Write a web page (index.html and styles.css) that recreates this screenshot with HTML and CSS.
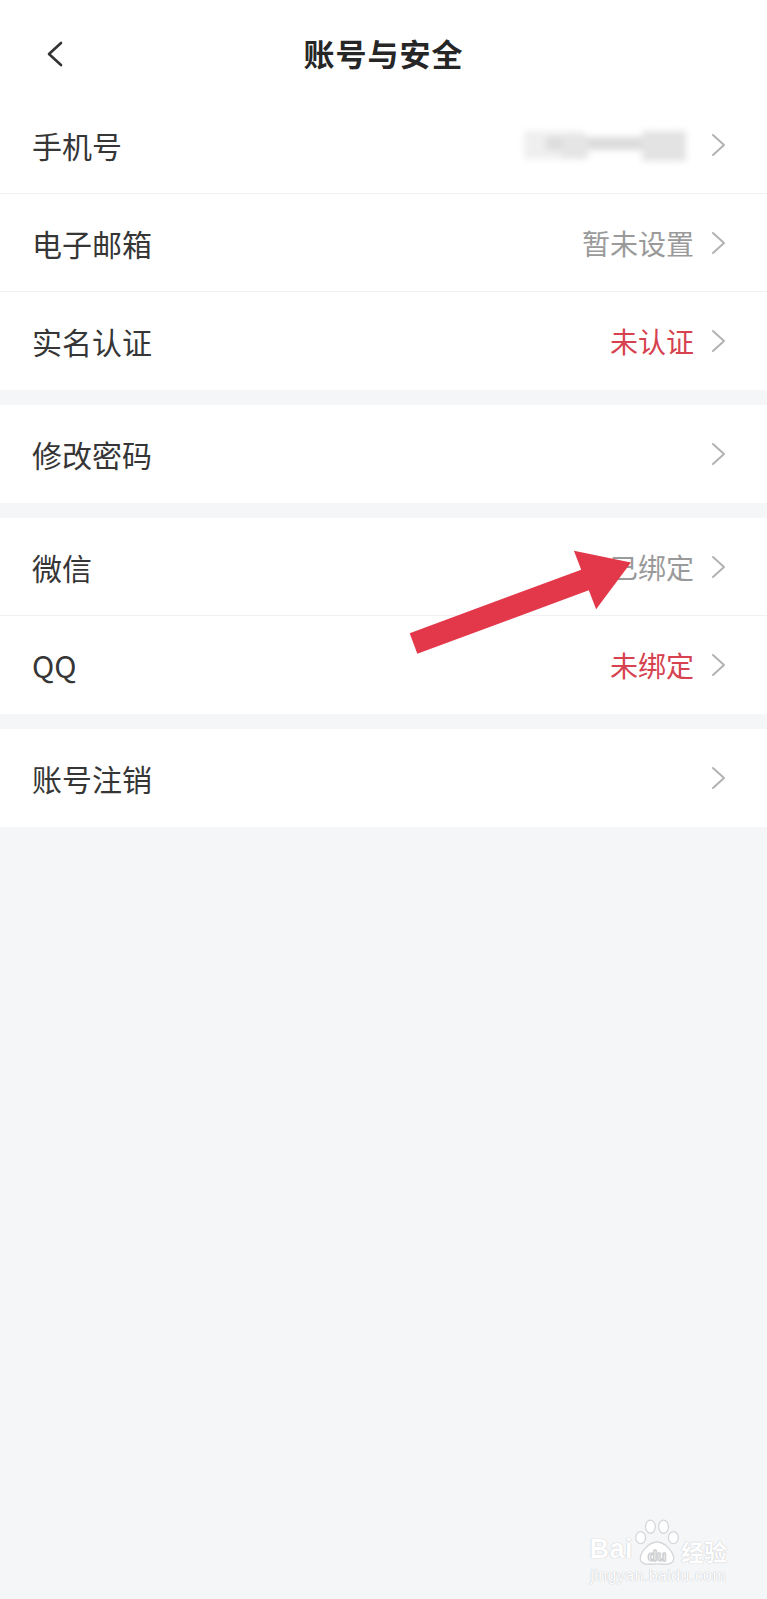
FILE: index.html
```html
<!DOCTYPE html>
<html lang="zh-CN">
<head>
<meta charset="utf-8">
<title>账号与安全</title>
<link rel="stylesheet" href="styles.css">
</head>
<body>
<div class="page">
  <header class="nav">
    <button class="back" aria-label="返回">
      <svg width="18" height="26" viewBox="0 0 18 26"><polyline points="15,2 3,13 15,24" fill="none" stroke="#333" stroke-width="2.6" stroke-linecap="round" stroke-linejoin="round"/></svg>
    </button>
    <h1 class="title">账号与安全</h1>
    <span class="nav-spacer"></span>
  </header>

  <section class="group">
    <a class="row">
      <span class="label">手机号</span>
      <span class="masked" aria-label="已隐藏的手机号">
        <i class="m m1"></i><i class="m m2"></i><i class="m m3"></i><i class="m m4"></i>
      </span>
      <svg class="chev" width="16" height="24" viewBox="0 0 16 24"><polyline points="2,2 13,12 2,22" fill="none" stroke="#b2b2b2" stroke-width="2" stroke-linecap="round" stroke-linejoin="round"/></svg>
    </a>
    <a class="row">
      <span class="label">电子邮箱</span>
      <span class="value">暂未设置</span>
      <svg class="chev" width="16" height="24" viewBox="0 0 16 24"><polyline points="2,2 13,12 2,22" fill="none" stroke="#b2b2b2" stroke-width="2" stroke-linecap="round" stroke-linejoin="round"/></svg>
    </a>
    <a class="row">
      <span class="label">实名认证</span>
      <span class="value warn">未认证</span>
      <svg class="chev" width="16" height="24" viewBox="0 0 16 24"><polyline points="2,2 13,12 2,22" fill="none" stroke="#b2b2b2" stroke-width="2" stroke-linecap="round" stroke-linejoin="round"/></svg>
    </a>
  </section>

  <section class="group">
    <a class="row">
      <span class="label">修改密码</span>
      <svg class="chev" width="16" height="24" viewBox="0 0 16 24"><polyline points="2,2 13,12 2,22" fill="none" stroke="#b2b2b2" stroke-width="2" stroke-linecap="round" stroke-linejoin="round"/></svg>
    </a>
  </section>

  <section class="group">
    <a class="row">
      <span class="label">微信</span>
      <span class="value">已绑定</span>
      <svg class="chev" width="16" height="24" viewBox="0 0 16 24"><polyline points="2,2 13,12 2,22" fill="none" stroke="#b2b2b2" stroke-width="2" stroke-linecap="round" stroke-linejoin="round"/></svg>
    </a>
    <a class="row">
      <span class="label">QQ</span>
      <span class="value warn">未绑定</span>
      <svg class="chev" width="16" height="24" viewBox="0 0 16 24"><polyline points="2,2 13,12 2,22" fill="none" stroke="#b2b2b2" stroke-width="2" stroke-linecap="round" stroke-linejoin="round"/></svg>
    </a>
  </section>

  <section class="group">
    <a class="row">
      <span class="label">账号注销</span>
      <svg class="chev" width="16" height="24" viewBox="0 0 16 24"><polyline points="2,2 13,12 2,22" fill="none" stroke="#b2b2b2" stroke-width="2" stroke-linecap="round" stroke-linejoin="round"/></svg>
    </a>
  </section>

  <svg class="annot-arrow" width="767" height="1599" viewBox="0 0 767 1599" aria-hidden="true">
    <polygon points="409.7,633.2 581.2,569.7 573.9,550.8 631,562.5 596.1,609.2 588.8,590.3 417.3,653.8" fill="#e2384a"/>
  </svg>

  <div class="watermark" aria-hidden="true">
    <div class="wm-top">
      <span class="wm-bai">Bai</span>
      <svg class="wm-paw" width="46" height="48" viewBox="0 0 42 44">
        <g fill="#fff" stroke="#d6d7db" stroke-width="1.2">
          <ellipse cx="6" cy="18" rx="4.5" ry="5.5"/>
          <ellipse cx="15" cy="8" rx="4.5" ry="6"/>
          <ellipse cx="27" cy="8" rx="4.5" ry="6"/>
          <ellipse cx="36" cy="18" rx="4.5" ry="5.5"/>
          <path d="M21 22 C13 22 4 33 6 39 C8 44 16 42 21 42 C26 42 34 44 36 39 C38 33 29 22 21 22 Z"/>
        </g>
        <text x="21" y="39" text-anchor="middle" class="wm-du">du</text>
      </svg>
      <span class="wm-jy">经验</span>
    </div>
    <div class="wm-url">jingyan.baidu.com</div>
  </div>
</div>
</body>
</html>
```

FILE: styles.css
```css
html, body {
  margin: 0;
  padding: 0;
  background: #f5f6f8;
}

.page {
  position: relative;
  width: 767px;
  min-height: 1599px;
  background: #f5f6f8;
  font-family: "Noto Sans CJK SC", "Noto Sans", sans-serif;
  color: #333;
}

.nav {
  height: 96px;
  box-sizing: border-box;
  padding: 8px 0 0 46px;
  background: #fff;
  display: grid;
  grid-template-columns: 1fr auto 1fr;
  align-items: center;
}

.back {
  justify-self: start;
  border: 0;
  background: none;
  padding: 0;
  margin-top: 4px;
  display: flex;
}

.title {
  margin: 0;
  font-size: 31px;
  font-weight: 700;
  color: #262626;
  letter-spacing: 1px;
  transform: translateX(-23px);
}

.group {
  background: #fff;
  margin-bottom: 15px;
}

.row {
  height: 98px;
  box-sizing: border-box;
  padding: 0 40px 0 32px;
  display: flex;
  align-items: center;
  border-bottom: 1px solid #f1f1f3;
}

.row:last-child {
  border-bottom: 0;
}

.label {
  flex: 1;
  font-size: 30px;
  color: #363636;
  line-height: 1;
}

.value {
  font-size: 28px;
  color: #9a9a9a;
  margin-right: 17px;
  line-height: 1;
}

.value.warn {
  color: #d6424f;
}

.chev {
  flex: none;
}

.masked {
  position: relative;
  width: 170px;
  height: 36px;
  margin-right: 17px;
  filter: blur(3px);
}

.m {
  position: absolute;
  display: block;
}

.m1 { left: 0; top: 4px; width: 60px; height: 28px; background: #efefef; }
.m2 { left: 22px; top: 10px; width: 140px; height: 13px; background: #dcdcdc; }
.m3 { left: 38px; top: 8px; width: 26px; height: 24px; background: #e5e5e5; }
.m4 { left: 118px; top: 4px; width: 44px; height: 30px; background: #e3e3e3; }

.annot-arrow {
  position: absolute;
  left: 0;
  top: 0;
  pointer-events: none;
}

.watermark {
  position: absolute;
  right: 40px;
  bottom: 15px;
  display: flex;
  flex-direction: column;
  align-items: center;
  color: #fff;
  text-shadow: 0 0 1px #c6c7cb, 0 0 1px #c6c7cb;
}

.wm-top {
  display: flex;
  align-items: flex-end;
}

.wm-bai {
  font-family: "Liberation Sans", Arial, sans-serif;
  font-weight: 700;
  font-size: 27px;
  line-height: 1;
  letter-spacing: 0.5px;
}

.wm-paw {
  margin: 0 1px -3px 1px;
}

.wm-du {
  font-family: "Liberation Sans", Arial, sans-serif;
  font-weight: 700;
  font-size: 14px;
  fill: #fff;
  stroke: #cacbcf;
  stroke-width: 0.5px;
}

.wm-jy {
  font-family: "Noto Sans CJK SC", sans-serif;
  font-weight: 700;
  font-size: 23px;
  line-height: 1;
}

.wm-url {
  margin-top: 5px;
  font-family: "Liberation Sans", Arial, sans-serif;
  font-size: 16px;
  line-height: 1;
  letter-spacing: 0.4px;
}
```
